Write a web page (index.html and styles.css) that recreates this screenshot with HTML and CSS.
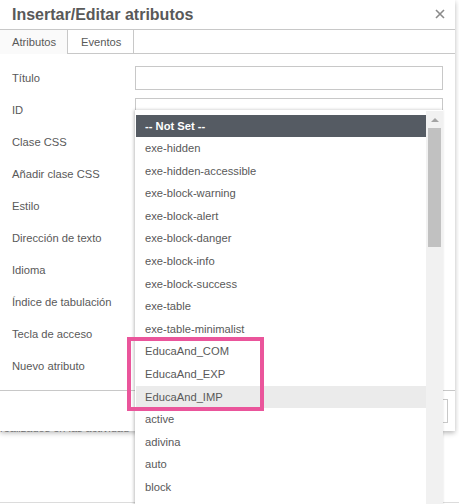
FILE: index.html
```html
<!DOCTYPE html>
<html lang="es">
<head>
  <meta charset="UTF-8" />
  <meta name="viewport" content="width=device-width, initial-scale=1.0"/>
  <title>Insertar/Editar atributos</title>
  <link rel="stylesheet" href="styles.css">
</head>
<body>
  <div class="page">
    <!-- page behind the dialog -->
    <p class="bg-text">realizados en las actividades</p>
    <div class="bg-rule"></div>

    <!-- Dialog -->
    <div class="dialog">
      <div class="dlg-head">
        <span>Insertar/Editar atributos</span>
        <svg class="close" width="10" height="10" viewBox="0 0 10 10">
          <path d="M1 1 L9 9 M9 1 L1 9" stroke="#8a8a8a" stroke-width="1.6" fill="none"/>
        </svg>
      </div>

      <div class="tabs">
        <div class="tab active">Atributos</div>
        <div class="tab">Eventos</div>
      </div>

      <div class="dlg-body">
        <label>Título</label><input type="text">
        <label>ID</label><input type="text">
        <label>Clase CSS</label><input type="text">
        <label>Añadir clase CSS</label><input type="text">
        <label>Estilo</label><input type="text">
        <label>Dirección de texto</label><input type="text">
        <label>Idioma</label><input type="text">
        <label>Índice de tabulación</label><input type="text">
        <label>Tecla de acceso</label><input type="text">
        <label>Nuevo atributo</label><input type="text">
      </div>

      <div class="dlg-foot">
        <button>Cancelar</button>
        <button>Guardar</button>
      </div>
    </div>

    <!-- Open class menu -->
    <div class="menu">
      <div class="menu-list">
        <div class="menu-item head">-- Not Set --</div>
        <div class="menu-item">exe-hidden</div>
        <div class="menu-item">exe-hidden-accessible</div>
        <div class="menu-item">exe-block-warning</div>
        <div class="menu-item">exe-block-alert</div>
        <div class="menu-item">exe-block-danger</div>
        <div class="menu-item">exe-block-info</div>
        <div class="menu-item">exe-block-success</div>
        <div class="menu-item">exe-table</div>
        <div class="menu-item">exe-table-minimalist</div>
        <div class="menu-item">EducaAnd_COM</div>
        <div class="menu-item">EducaAnd_EXP</div>
        <div class="menu-item hover">EducaAnd_IMP</div>
        <div class="menu-item">active</div>
        <div class="menu-item">adivina</div>
        <div class="menu-item">auto</div>
        <div class="menu-item">block</div>
      </div>
      <div class="scrollbar">
        <div class="arrow"></div>
        <div class="thumb"></div>
      </div>
    </div>

    <!-- highlight mark -->
    <div class="mark"></div>
  </div>
</body>
</html>
```

FILE: styles.css
```css
body {
  margin: 0;
  padding: 0;
  font-family: 'Liberation Sans', Arial, sans-serif;
  background: #fff;
  color: #595959;
}

.page {
  position: relative;
  width: 459px;
  height: 504px;
  overflow: hidden;
}

.bg-text {
  width: 130px;
  overflow: hidden;
  margin: 0;
  padding: 422px 0 0 0;
  font-size: 11px;
  line-height: 13px;
  color: #8c8c8c;
  white-space: nowrap;
}

.bg-rule {
  margin-top: 67px;
  border-top: 1px solid #dcdcdc;
}

/* dialog */

.dialog {
  position: absolute;
  top: 0;
  left: 0;
  width: 455px;
  background: #fff;
  box-shadow: 0 2px 5px rgba(0,0,0,0.28);
}

.dlg-head {
  height: 29px;
  border-bottom: 1px solid #c8c8c8;
  display: flex;
  align-items: center;
  justify-content: space-between;
  padding: 0 10px 0 12px;
  font-size: 16px;
  font-weight: bold;
  color: #595959;
}

.close {
  display: block;
  margin-top: -1px;
}

.tabs {
  display: flex;
  height: 23px;
  border-bottom: 1px solid #c8c8c8;
}

.tab {
  box-sizing: border-box;
  height: 23px;
  border-right: 1px solid #c8c8c8;
  font-size: 11.2px;
  line-height: 24px;
  padding-left: 13px;
  width: 66px;
  color: #595959;
}

.tab.active {
  width: 68px;
  padding-left: 12px;
  height: 24px;
  background: #fafafa;
}

.dlg-body {
  display: grid;
  grid-template-columns: 123px 1fr;
  grid-auto-rows: 24px;
  row-gap: 8px;
  padding: 12px 12px 12px 12px;
}

.dlg-body label {
  font-size: 11.2px;
  line-height: 24px;
  color: #595959;
}

.dlg-body input {
  box-sizing: border-box;
  height: 24px;
  width: 100%;
  margin: 0;
  border: 1px solid #c8c8c8;
  background: #fff;
}

.dlg-foot {
  height: 40px;
  border-top: 1px solid #c8c8c8;
  display: flex;
  justify-content: flex-end;
  align-items: center;
  gap: 6px;
  padding-right: 7px;
}

.dlg-foot button {
  height: 24px;
  border: 1px solid #c8c8c8;
  background: #fff;
  color: #595959;
  font-family: inherit;
  font-size: 11.2px;
  padding: 0 12px;
}

/* dropdown menu */

.menu {
  position: absolute;
  left: 135px;
  top: 110px;
  width: 308px;
  height: 420px;
  padding-left: 1px;
  box-sizing: border-box;
  background: #fff;
  box-shadow: -1px 0 3px rgba(0,0,0,0.25);
  display: flex;
}

.menu-list {
  width: 290px;
  padding-top: 5px;
}

.menu-item {
  height: 22.6px;
  line-height: 22.6px;
  padding-left: 9px;
  font-size: 11.2px;
  color: #595959;
  white-space: nowrap;
}

.menu-item.head {
  height: 22px;
  line-height: 22px;
  background: #555b63;
  color: #fff;
  font-weight: bold;
}

.menu-item.hover {
  background: #ebebeb;
}

.scrollbar {
  width: 17px;
  margin-top: 1px;
  background: #f1f1f1;
  position: relative;
}

.arrow {
  width: 0;
  height: 0;
  margin: 7px auto 0;
  border-left: 4px solid transparent;
  border-right: 4px solid transparent;
  border-bottom: 4px solid #a3a3a3;
}

.thumb {
  width: 13px;
  height: 119px;
  margin: 6px auto 0;
  background: #c1c1c1;
}

.mark {
  position: absolute;
  left: 127px;
  top: 337px;
  width: 129px;
  height: 66px;
  border: 4px solid #ea559b;
}
```
